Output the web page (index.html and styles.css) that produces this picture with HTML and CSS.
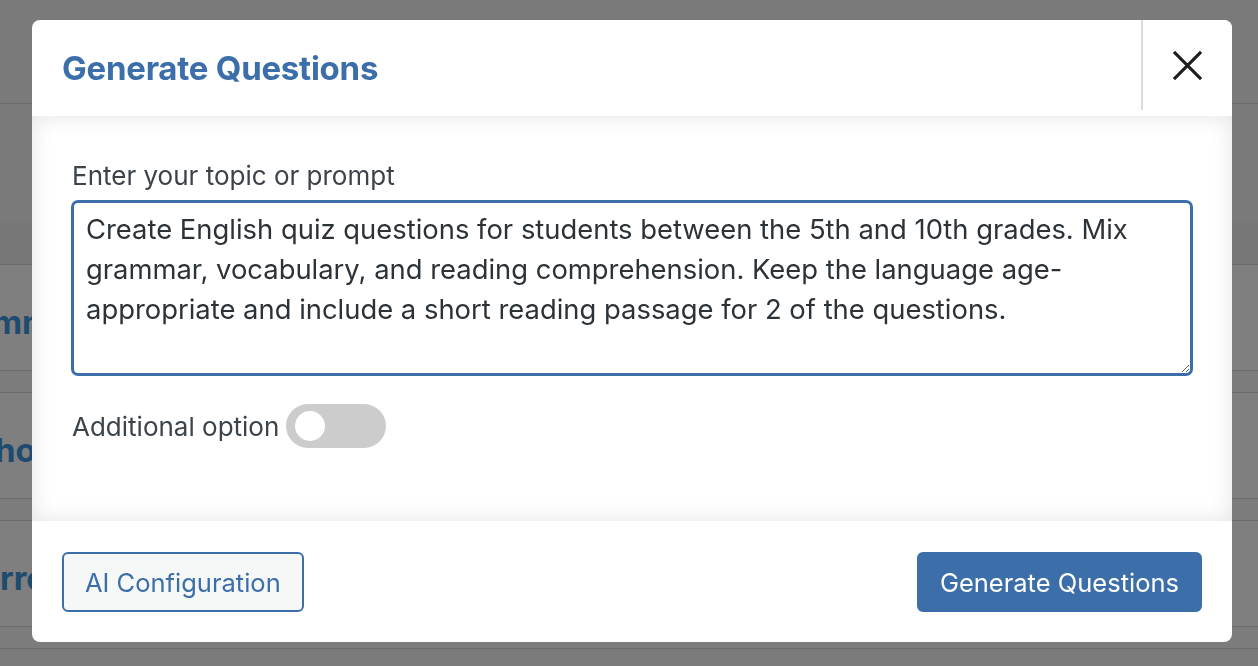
FILE: index.html
```html
<!DOCTYPE html>
<html lang="en">
<head>
<meta charset="utf-8">
<title>Generate Questions</title>
<link rel="stylesheet" href="styles.css">
</head>
<body>
<div class="page">
  <div class="page-head"></div>
  <div class="page-intro"></div>
  <div class="thead"></div>
  <div class="row"><span class="row-title t1">mmary</span></div>
  <div class="gap"></div>
  <div class="row"><span class="row-title t2">hors</span></div>
  <div class="gap"></div>
  <div class="row"><span class="row-title t3">rrect</span></div>
  <div class="gap"></div>
</div>

<div class="modal" role="dialog" aria-labelledby="modal-title">
  <div class="modal-head">
    <h1 id="modal-title" class="modal-title">Generate Questions</h1>
    <button class="close-btn" aria-label="Close">
      <svg viewBox="0 0 32 32" width="32" height="32" aria-hidden="true">
        <path d="M2 2 L30 30 M30 2 L2 30" stroke="#1e1e1e" stroke-width="3.2" fill="none"/>
      </svg>
    </button>
  </div>
  <div class="modal-body">
    <label class="field-label" for="prompt">Enter your topic or prompt</label>
    <textarea id="prompt" class="prompt">Create English quiz questions for students between the 5th and 10th grades. Mix grammar, vocabulary, and reading comprehension. Keep the language age-appropriate and include a short reading passage for 2 of the questions.</textarea>
    <div class="option-row">
      <span class="option-label">Additional option</span>
      <span class="toggle"><span class="knob"></span></span>
    </div>
  </div>
  <div class="modal-foot">
    <button class="btn btn-secondary">AI Configuration</button>
    <button class="btn btn-primary">Generate Questions</button>
  </div>
</div>
</body>
</html>
```

FILE: styles.css
```css
* { box-sizing: border-box; }

html, body {
  margin: 0;
  padding: 0;
  height: 100%;
  overflow: hidden;
}

body {
  background: #7b7b7b;
  font-family: Inter, "Noto Sans", "Liberation Sans", sans-serif;
}

/* dimmed page behind the modal */
.page {
  width: 100%;
}
.page-head {
  height: 104px;
  border-bottom: 1px solid #6c6a6b;
  background: #7a7a7a;
}
.page-intro {
  height: 119px;
  background: #7a7a7a;
}
.thead {
  height: 42px;
  background: #777777;
  border-bottom: 1px solid #6c6a6b;
}
.row {
  height: 106px;
  border-bottom: 1px solid #6c6a6b;
  background: #7f7f7f;
  display: flex;
  align-items: center;
  overflow: hidden;
  white-space: nowrap;
  padding-top: 8px;
}
.gap {
  height: 22px;
  border-bottom: 1px solid #6c6a6b;
  background: #7c7c7c;
}
.row-title {
  font-weight: 700;
  font-size: 33px;
  color: #1e4b6e;
}
.t1 { margin-left: -8px; }
.t2 { margin-left: -5px; }
.t3 { margin-left: 0; }

/* modal */
.modal {
  position: fixed;
  left: 32px;
  top: 20px;
  width: 1200px;
  height: 622px;
  background: #fff;
  border-radius: 8px;
  display: flex;
  flex-direction: column;
  overflow: hidden;
}

.modal-head {
  height: 96px;
  display: flex;
  align-items: flex-start;
  justify-content: space-between;
  flex-shrink: 0;
}
.modal-title {
  margin: 0;
  padding-left: 30px;
  height: 96px;
  display: flex;
  align-items: center;
  font-size: 33px;
  font-weight: 700;
  color: #3c6eaa;
  letter-spacing: -0.25px;
}
.close-btn {
  width: 91px;
  height: 90px;
  border: 0;
  border-left: 2px solid #dcdcde;
  background: #fff;
  padding: 0;
  display: flex;
  align-items: center;
  justify-content: center;
  cursor: pointer;
}
.close-btn svg {
  width: 31px;
  height: 31px;
}

.modal-body {
  flex: 1;
  padding: 42px 40px 0 40px;
  box-shadow: inset 0 0 22px rgba(0, 0, 0, 0.11);
  display: flex;
  flex-direction: column;
}
.field-label {
  display: block;
  font-size: 26px;
  line-height: 36px;
  color: #3c434a;
  margin-bottom: 7px;
}
.prompt {
  display: block;
  width: 100%;
  height: 174px;
  border: 2px solid #3c6eaa;
  box-shadow: 0 0 0 1px #3c6eaa;
  border-radius: 6px;
  padding: 6px 12px 0 12px;
  font-family: inherit;
  font-size: 27.4px;
  line-height: 40px;
  color: #2c3338;
  background: #fff;
  resize: vertical;
  outline: none;
}
.option-row {
  margin-top: 29px;
  display: flex;
  align-items: center;
  gap: 7px;
}
.option-label {
  font-size: 26px;
  color: #3c434a;
}
.toggle {
  width: 100px;
  height: 44px;
  border-radius: 22px;
  background: #cccccc;
  display: flex;
  align-items: center;
  padding-left: 9px;
}
.knob {
  width: 30px;
  height: 30px;
  border-radius: 50%;
  background: #fff;
}

.modal-foot {
  height: 121px;
  flex-shrink: 0;
  padding: 31px 30px 30px 30px;
  display: flex;
  justify-content: space-between;
  align-items: flex-start;
}
.btn {
  height: 60px;
  border-radius: 6px;
  font-family: inherit;
  font-size: 25.5px;
  padding: 0 21px;
  white-space: nowrap;
  cursor: pointer;
}
.btn-secondary {
  border: 2px solid #3c6eaa;
  background: #f6f7f7;
  color: #3c6eaa;
}
.btn-primary {
  border: 2px solid #3c6eaa;
  background: #3c6eaa;
  color: #fff;
}
```
